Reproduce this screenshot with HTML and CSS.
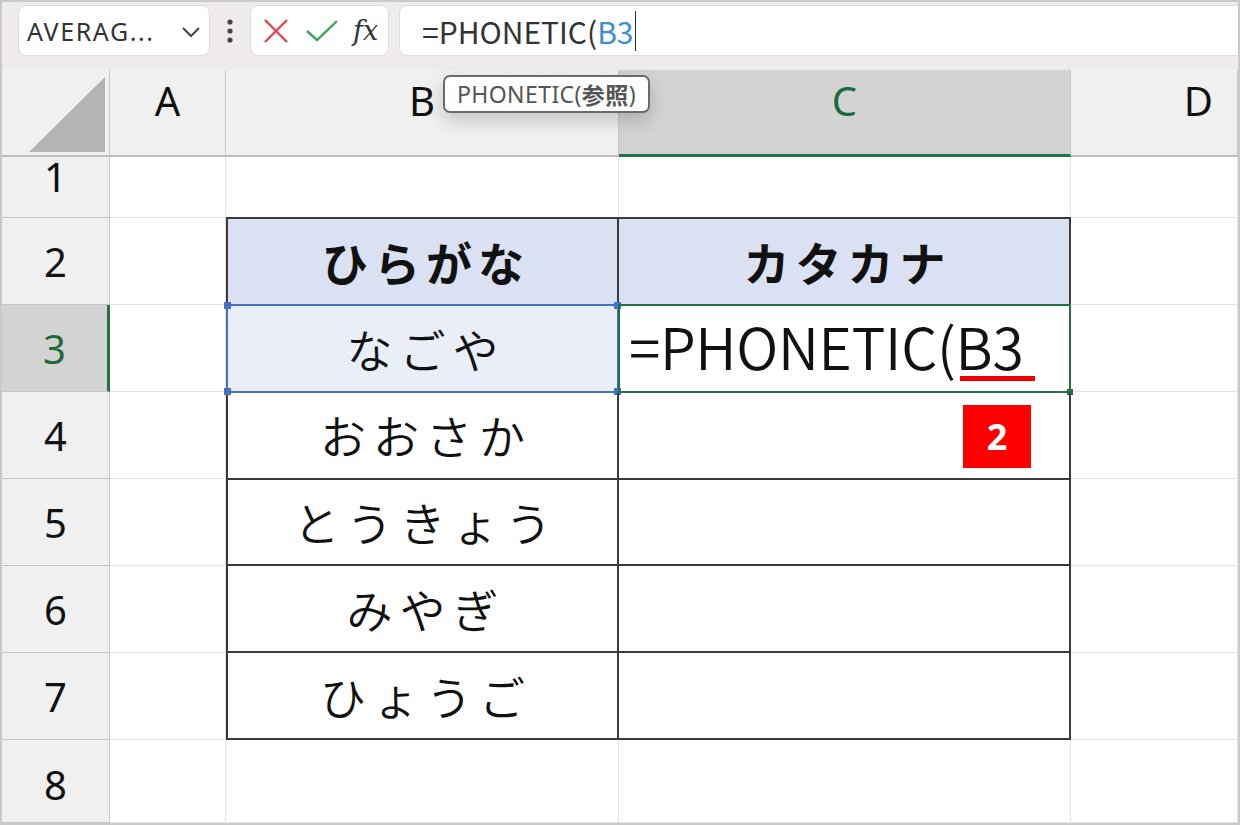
FILE: index.html
```html
<!DOCTYPE html>
<html lang="ja">
<head>
  <meta charset="UTF-8" />
  <title>PHONETIC</title>
  <link rel="stylesheet" href="styles.css">
</head>
<body>
  <div class="app">

    <!-- formula bar -->
    <div class="toolbar">
      <div class="namebox">
        <span class="name-text">AVERAG...</span>
        <svg class="chev" width="20" height="12" viewBox="0 0 20 12"><polyline points="2,2 10,10 18,2" fill="none" stroke="#444" stroke-width="2"/></svg>
      </div>
      <div class="dots">
        <svg width="8" height="26" viewBox="0 0 8 26"><circle cx="4" cy="4" r="2.6" fill="#444"/><circle cx="4" cy="13" r="2.6" fill="#444"/><circle cx="4" cy="22" r="2.6" fill="#444"/></svg>
      </div>
      <div class="fbuttons">
        <svg width="26" height="26" viewBox="0 0 26 26"><line x1="2" y1="2" x2="24" y2="24" stroke="#e5484a" stroke-width="2.4"/><line x1="24" y1="2" x2="2" y2="24" stroke="#e5484a" stroke-width="2.4"/></svg>
        <svg width="34" height="24" viewBox="0 0 34 24"><polyline points="2,12 12,21 32,2" fill="none" stroke="#3aa757" stroke-width="2.4"/></svg>
        <span class="fx">fx</span>
      </div>
      <div class="formula">
        <span>=PHONETIC(</span><span class="ref">B3</span><span class="caret"></span>
      </div>
    </div>

    <!-- grid -->
    <div class="sheet">
      <div class="hd corner"><span class="tri"></span></div>
      <div class="hd col">A</div>
      <div class="hd col">B</div>
      <div class="hd col sel">C</div>
      <div class="hd col col-d">D</div>

      <div class="hd row row-1">1</div>
      <div class="cell"></div>
      <div class="cell"></div>
      <div class="cell"></div>
      <div class="cell"></div>

      <div class="hd row">2</div>
      <div class="cell"></div>
      <div class="cell"></div>

      <div class="hd row sel-row">3</div>
      <div class="cell"></div>
      <div class="cell"></div>

      <div class="hd row">4</div>
      <div class="cell"></div>
      <div class="cell"></div>

      <div class="hd row">5</div>
      <div class="cell"></div>
      <div class="cell"></div>

      <div class="hd row">6</div>
      <div class="cell"></div>
      <div class="cell"></div>

      <div class="hd row">7</div>
      <div class="cell"></div>
      <div class="cell"></div>

      <div class="hd row row-8">8</div>
      <div class="cell"></div>
      <div class="cell"></div>
      <div class="cell"></div>
      <div class="cell"></div>

      <div class="table">
        <div class="tc th">ひらがな</div>
        <div class="tc th">カタカナ</div>

        <div class="tc ref-cell">なごや<span class="ref-frame"><i class="h tl"></i><i class="h tr"></i><i class="h bl"></i><i class="h br"></i></span></div>
        <div class="tc active">=PHONETIC(B3<span class="mark-line"></span><span class="active-frame"><i class="ah"></i></span></div>

        <div class="tc">おおさか</div>
        <div class="tc"><span class="badge">2</span></div>

        <div class="tc">とうきょう</div>
        <div class="tc"></div>

        <div class="tc">みやぎ</div>
        <div class="tc"></div>

        <div class="tc">ひょうご</div>
        <div class="tc"></div>
      </div>
    </div>

    <div class="tip">PHONETIC(<b>参照</b>)</div>
  </div>
</body>
</html>
```

FILE: styles.css
```css
body {
  margin: 0;
  padding: 0;
  background: #fff;
  font-family: "Noto Sans", "Noto Sans CJK JP", sans-serif;
  color: #222;
}

.app {
  position: relative;
  width: 1240px;
  height: 825px;
  box-sizing: border-box;
  border: 2px solid #c9c9c9;
  overflow: hidden;
}

/* formula bar */
.toolbar {
  height: 68px;
  background: #f0ebeb;
  display: flex;
  align-items: flex-start;
  padding: 3px 0 0 16px;
  box-sizing: border-box;
}

.namebox,
.fbuttons,
.formula {
  height: 51px;
  background: #fff;
  border: 1px solid #e2dddd;
  border-radius: 8px;
  box-sizing: border-box;
  display: flex;
  align-items: center;
}

.namebox {
  width: 192px;
  padding: 0 8px 0 8px;
  justify-content: space-between;
}

.name-text {
  font-size: 25px;
  letter-spacing: 1.6px;
  color: #333;
}

.chev {
  margin-top: 2px;
}

.dots {
  width: 40px;
  height: 51px;
  display: flex;
  align-items: center;
  justify-content: center;
}

.fbuttons {
  width: 139px;
  padding: 0 8px 0 12px;
  gap: 16px;
}

.fx {
  font-family: "DejaVu Serif", serif;
  font-style: italic;
  font-size: 27px;
  color: #333;
  margin-left: -2px;
}

.formula {
  flex: 1;
  margin-left: 10px;
  margin-right: -12px;
  padding-left: 22px;
  font-family: "Noto Sans CJK JP", sans-serif;
  font-size: 30px;
  color: #333;
}

.formula .ref {
  color: #3b8ed4;
}

.caret {
  display: inline-block;
  width: 1px;
  height: 40px;
  background: #333;
  margin-left: 1px;
}

/* grid */
.sheet {
  display: grid;
  grid-template-columns: 108px 116px 393px 452px 167px;
  grid-template-rows: 87px 61px repeat(6, 87px) 83px;
}

.hd {
  background: #f0f0f0;
  border-right: 1px solid #c6c6c6;
  border-bottom: 1px solid #c6c6c6;
  box-sizing: border-box;
  display: flex;
  align-items: center;
  justify-content: center;
  font-size: 40px;
  color: #111;
}

.col {
  border-bottom: 2px solid #bdbdbd;
  padding-bottom: 24px;
}

.corner {
  border-bottom: 2px solid #bdbdbd;
  position: relative;
}

.tri {
  position: absolute;
  left: 27px;
  top: 7px;
  width: 76px;
  height: 75px;
  background: #b4b4b4;
  clip-path: polygon(100% 0, 100% 100%, 0 100%);
}

.col.sel {
  background: #d3d3d3;
  color: #1d6b3c;
  border-bottom: 3px solid #217346;
}

.col-d {
  justify-content: flex-end;
  padding-right: 24px;
}

.row-1 {
  padding-bottom: 22px;
}

.row-8 {
  padding-top: 6px;
}

.sel-row {
  background: #d3d3d3;
  color: #1d6b3c;
  border-right: 3px solid #217346;
}

.cell {
  border-right: 1px solid #e3e3e3;
  border-bottom: 1px solid #e3e3e3;
  box-sizing: border-box;
}

/* data table B2:C7 */
.table {
  grid-column: 3 / 5;
  grid-row: 3 / 9;
  display: grid;
  grid-template-columns: 391px 452px;
  grid-template-rows: repeat(6, minmax(0, 1fr));
  border-top: 2px solid #3b3b3b;
  border-left: 2px solid #3b3b3b;
  margin-top: -1px;
}

.tc {
  position: relative;
  min-height: 0;
  border-right: 2px solid #3b3b3b;
  border-bottom: 2px solid #3b3b3b;
  display: flex;
  align-items: center;
  justify-content: center;
  font-family: "Noto Sans CJK JP", sans-serif;
  font-size: 46px;
  font-weight: 350;
  line-height: 1.2;
  letter-spacing: 7px;
  padding-left: 7px;
  color: #111;
}

.th {
  background: #d9e1f2;
  font-weight: bold;
  letter-spacing: 6px;
}

.ref-cell {
  background: #e9eef8;
}

.ref-frame {
  position: absolute;
  left: -2px;
  top: -2px;
  right: -2px;
  bottom: -2px;
  border: 2px solid #4472c4;
}

.h {
  position: absolute;
  width: 7px;
  height: 7px;
  background: #4472c4;
}

.tl { left: -4px; top: -4px; }
.tr { right: -4px; top: -4px; }
.bl { left: -4px; bottom: -4px; }
.br { right: -4px; bottom: -4px; }

.active {
  justify-content: flex-start;
  padding-left: 10px;
  padding-bottom: 6px;
  font-size: 57px;
  line-height: 1;
  letter-spacing: -0.3px;
}

.active-frame {
  position: absolute;
  left: -1px;
  top: -2px;
  right: -2px;
  bottom: -2px;
  border: 2px solid #217346;
}

.ah {
  position: absolute;
  right: -4px;
  bottom: -4px;
  width: 6px;
  height: 6px;
  background: #217346;
}

.mark-line {
  position: absolute;
  left: 341px;
  top: 70px;
  width: 75px;
  height: 5px;
  background: #ee0000;
}

.badge {
  position: absolute;
  left: 344px;
  top: 12px;
  width: 68px;
  height: 63px;
  background: #ff0000;
  color: #fff;
  font-family: "Noto Sans", sans-serif;
  font-weight: bold;
  font-size: 36px;
  letter-spacing: 0;
  display: flex;
  align-items: center;
  justify-content: center;
}

/* function tooltip */
.tip {
  position: absolute;
  left: 441px;
  top: 73px;
  height: 34px;
  padding: 0 12px;
  background: #fff;
  border: 2px solid #6b6b6b;
  border-radius: 7px;
  box-shadow: 0 8px 18px rgba(0, 0, 0, 0.18);
  display: flex;
  align-items: center;
  font-family: "Noto Sans", "Noto Sans CJK JP", sans-serif;
  font-size: 23px;
  letter-spacing: 0.4px;
  color: #555;
  white-space: nowrap;
}

.tip b {
  font-family: "Noto Sans CJK JP", sans-serif;
  font-weight: bold;
}
```
